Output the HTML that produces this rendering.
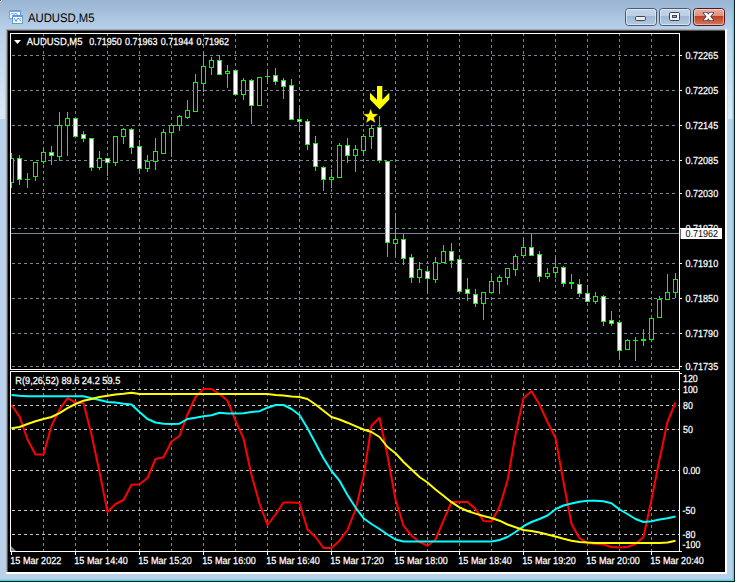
<!DOCTYPE html>
<html><head><meta charset="utf-8"><title>AUDUSD,M5</title>
<style>html,body{margin:0;padding:0;background:#fff;overflow:hidden}body{width:737px;height:583px}</style></head>
<body>
<svg width="737" height="583" viewBox="0 0 737 583" style="display:block;font-family:'Liberation Sans',sans-serif;text-rendering:geometricPrecision">
<defs>
<linearGradient id="tb" x1="0" y1="0" x2="0" y2="1"><stop offset="0" stop-color="#99b4d1"/><stop offset="1" stop-color="#b9d1ea"/></linearGradient>
<linearGradient id="bt" x1="0" y1="0" x2="0" y2="1"><stop offset="0" stop-color="#c3d5e9"/><stop offset="0.45" stop-color="#bacee5"/><stop offset="0.47" stop-color="#9fb8d6"/><stop offset="1" stop-color="#b5cae2"/></linearGradient>
<linearGradient id="bc" x1="0" y1="0" x2="0" y2="1"><stop offset="0" stop-color="#ebb0a2"/><stop offset="0.45" stop-color="#dd8f7d"/><stop offset="0.47" stop-color="#c0401f"/><stop offset="1" stop-color="#d67a64"/></linearGradient>
<linearGradient id="sg" x1="0" y1="0" x2="0" y2="1"><stop offset="0" stop-color="#b9d1ea"/><stop offset="1" stop-color="#dde8f4"/></linearGradient>
<clipPath id="cm"><rect x="11" y="34" width="668" height="335"/></clipPath>
<clipPath id="cs"><rect x="11" y="372" width="668" height="179"/></clipPath>
</defs>
<rect width="737" height="583" fill="#ffffff"/>
<rect x="0" y="0" width="734" height="581" fill="#b9d1ea"/>
<rect x="0" y="0" width="734" height="30" fill="url(#tb)"/>
<rect x="0" y="30" width="4.8" height="89" fill="url(#sg)"/>
<rect x="728" y="30" width="5" height="89" fill="url(#sg)"/>
<rect x="732.6" y="0" width="1.4" height="581" fill="#3fd8f3"/>
<rect x="0" y="579.6" width="734" height="1.4" fill="#3fd8f3"/>
<rect x="734" y="0" width="1" height="582" fill="#1a1a1a"/>
<rect x="0" y="581" width="735" height="1" fill="#1a1a1a"/>
<rect x="0" y="0" width="1" height="1" fill="#555555"/>
<rect x="1" y="0" width="1" height="1" fill="#e4ebf3"/>
<rect x="0" y="1" width="1" height="1" fill="#e4ebf3"/>
<rect x="6" y="29" width="721" height="545" fill="#ffffff"/>
<rect x="6" y="29" width="719" height="543" fill="#a4a9b0"/>
<rect x="7" y="30" width="718" height="542" fill="#555555"/>
<rect x="8" y="31" width="717" height="541" fill="#000000"/>
<g shape-rendering="crispEdges">
<rect x="9" y="10" width="12" height="9" fill="#6fa0f6"/>
<rect x="10" y="11.6" width="10" height="6.4" fill="#fdfdff"/>
<rect x="12" y="15" width="11" height="9" fill="#5f96f8"/>
<rect x="13" y="16.6" width="9" height="6.4" fill="#ffffff"/>
<path d="M9.5 10.5 h11 v8 M12.5 23.5 v-8 h10 v8 z" fill="none" stroke="#5aa884" stroke-width="1" stroke-dasharray="1 1" opacity="0.7"/>
</g>
<path d="M11 14.5 l1.5-1.5 1.5 1.5 1.5-1.5 2 2" fill="none" stroke="#4f8dfa" stroke-width="1"/>
<path d="M14 18 l2 3.5 1.5-3 1.5 0 2 3" fill="none" stroke="#4f8dfa" stroke-width="1"/>
<text x="28" y="21.5" font-size="12.4" fill="#000000" textLength="66.5" lengthAdjust="spacingAndGlyphs">AUDUSD,M5</text>
<rect x="625.5" y="8.5" width="31" height="17" rx="3" ry="3" fill="url(#bt)" stroke="#4e5a6e"/>
<rect x="626.5" y="9.5" width="29" height="15" rx="2" ry="2" fill="none" stroke="#ffffff" stroke-opacity="0.45"/>
<rect x="659.5" y="8.5" width="31" height="17" rx="3" ry="3" fill="url(#bt)" stroke="#4e5a6e"/>
<rect x="660.5" y="9.5" width="29" height="15" rx="2" ry="2" fill="none" stroke="#ffffff" stroke-opacity="0.45"/>
<rect x="693.5" y="8.5" width="31" height="17" rx="3" ry="3" fill="url(#bc)" stroke="#4a1a22"/>
<rect x="694.5" y="9.5" width="29" height="15" rx="2" ry="2" fill="none" stroke="#ffffff" stroke-opacity="0.45"/>
<rect x="635.5" y="16.5" width="10" height="4" rx="1.2" fill="#ececec" stroke="#3c4458"/>
<rect x="669.5" y="12.5" width="10" height="8" rx="1.2" fill="#f4f4f4" stroke="#3c4458"/>
<rect x="672.5" y="15.5" width="4" height="2" fill="#8fa9c9" stroke="#3c4458"/>
<polygon points="703.5,12.8 707,12.8 708.4,14.7 709.8,12.8 713.3,12.8 710.2,16.5 713.3,20.2 709.8,20.2 708.4,18.3 707,20.2 703.5,20.2 706.6,16.5" fill="#3c4458" stroke="#3c4458" stroke-width="1.6" stroke-linejoin="round"/>
<polygon points="703.5,12.8 707,12.8 708.4,14.7 709.8,12.8 713.3,12.8 710.2,16.5 713.3,20.2 709.8,20.2 708.4,18.3 707,20.2 703.5,20.2 706.6,16.5" fill="#ffffff"/>
<g shape-rendering="crispEdges">
<line x1="12" y1="55.5" x2="677" y2="55.5" stroke="#778899" stroke-dasharray="3 3"/>
<line x1="12" y1="90.5" x2="677" y2="90.5" stroke="#778899" stroke-dasharray="3 3"/>
<line x1="12" y1="125.5" x2="677" y2="125.5" stroke="#778899" stroke-dasharray="3 3"/>
<line x1="12" y1="160.5" x2="677" y2="160.5" stroke="#778899" stroke-dasharray="3 3"/>
<line x1="12" y1="193.5" x2="677" y2="193.5" stroke="#778899" stroke-dasharray="3 3"/>
<line x1="12" y1="228.5" x2="677" y2="228.5" stroke="#778899" stroke-dasharray="3 3"/>
<line x1="12" y1="263.5" x2="677" y2="263.5" stroke="#778899" stroke-dasharray="3 3"/>
<line x1="12" y1="298.5" x2="677" y2="298.5" stroke="#778899" stroke-dasharray="3 3"/>
<line x1="12" y1="333.5" x2="677" y2="333.5" stroke="#778899" stroke-dasharray="3 3"/>
<line x1="12" y1="366.5" x2="677" y2="366.5" stroke="#778899" stroke-dasharray="3 3"/>
<line x1="43.5" y1="33" x2="43.5" y2="369" stroke="#778899" stroke-dasharray="3 3"/>
<line x1="43.5" y1="372" x2="43.5" y2="551" stroke="#778899" stroke-dasharray="3 3" stroke-dashoffset="3"/>
<line x1="75.5" y1="33" x2="75.5" y2="369" stroke="#778899" stroke-dasharray="3 3"/>
<line x1="75.5" y1="372" x2="75.5" y2="551" stroke="#778899" stroke-dasharray="3 3" stroke-dashoffset="3"/>
<line x1="107.5" y1="33" x2="107.5" y2="369" stroke="#778899" stroke-dasharray="3 3"/>
<line x1="107.5" y1="372" x2="107.5" y2="551" stroke="#778899" stroke-dasharray="3 3" stroke-dashoffset="3"/>
<line x1="139.5" y1="33" x2="139.5" y2="369" stroke="#778899" stroke-dasharray="3 3"/>
<line x1="139.5" y1="372" x2="139.5" y2="551" stroke="#778899" stroke-dasharray="3 3" stroke-dashoffset="3"/>
<line x1="171.5" y1="33" x2="171.5" y2="369" stroke="#778899" stroke-dasharray="3 3"/>
<line x1="171.5" y1="372" x2="171.5" y2="551" stroke="#778899" stroke-dasharray="3 3" stroke-dashoffset="3"/>
<line x1="203.5" y1="33" x2="203.5" y2="369" stroke="#778899" stroke-dasharray="3 3"/>
<line x1="203.5" y1="372" x2="203.5" y2="551" stroke="#778899" stroke-dasharray="3 3" stroke-dashoffset="3"/>
<line x1="235.5" y1="33" x2="235.5" y2="369" stroke="#778899" stroke-dasharray="3 3"/>
<line x1="235.5" y1="372" x2="235.5" y2="551" stroke="#778899" stroke-dasharray="3 3" stroke-dashoffset="3"/>
<line x1="267.5" y1="33" x2="267.5" y2="369" stroke="#778899" stroke-dasharray="3 3"/>
<line x1="267.5" y1="372" x2="267.5" y2="551" stroke="#778899" stroke-dasharray="3 3" stroke-dashoffset="3"/>
<line x1="299.5" y1="33" x2="299.5" y2="369" stroke="#778899" stroke-dasharray="3 3"/>
<line x1="299.5" y1="372" x2="299.5" y2="551" stroke="#778899" stroke-dasharray="3 3" stroke-dashoffset="3"/>
<line x1="331.5" y1="33" x2="331.5" y2="369" stroke="#778899" stroke-dasharray="3 3"/>
<line x1="331.5" y1="372" x2="331.5" y2="551" stroke="#778899" stroke-dasharray="3 3" stroke-dashoffset="3"/>
<line x1="363.5" y1="33" x2="363.5" y2="369" stroke="#778899" stroke-dasharray="3 3"/>
<line x1="363.5" y1="372" x2="363.5" y2="551" stroke="#778899" stroke-dasharray="3 3" stroke-dashoffset="3"/>
<line x1="395.5" y1="33" x2="395.5" y2="369" stroke="#778899" stroke-dasharray="3 3"/>
<line x1="395.5" y1="372" x2="395.5" y2="551" stroke="#778899" stroke-dasharray="3 3" stroke-dashoffset="3"/>
<line x1="427.5" y1="33" x2="427.5" y2="369" stroke="#778899" stroke-dasharray="3 3"/>
<line x1="427.5" y1="372" x2="427.5" y2="551" stroke="#778899" stroke-dasharray="3 3" stroke-dashoffset="3"/>
<line x1="459.5" y1="33" x2="459.5" y2="369" stroke="#778899" stroke-dasharray="3 3"/>
<line x1="459.5" y1="372" x2="459.5" y2="551" stroke="#778899" stroke-dasharray="3 3" stroke-dashoffset="3"/>
<line x1="491.5" y1="33" x2="491.5" y2="369" stroke="#778899" stroke-dasharray="3 3"/>
<line x1="491.5" y1="372" x2="491.5" y2="551" stroke="#778899" stroke-dasharray="3 3" stroke-dashoffset="3"/>
<line x1="523.5" y1="33" x2="523.5" y2="369" stroke="#778899" stroke-dasharray="3 3"/>
<line x1="523.5" y1="372" x2="523.5" y2="551" stroke="#778899" stroke-dasharray="3 3" stroke-dashoffset="3"/>
<line x1="555.5" y1="33" x2="555.5" y2="369" stroke="#778899" stroke-dasharray="3 3"/>
<line x1="555.5" y1="372" x2="555.5" y2="551" stroke="#778899" stroke-dasharray="3 3" stroke-dashoffset="3"/>
<line x1="587.5" y1="33" x2="587.5" y2="369" stroke="#778899" stroke-dasharray="3 3"/>
<line x1="587.5" y1="372" x2="587.5" y2="551" stroke="#778899" stroke-dasharray="3 3" stroke-dashoffset="3"/>
<line x1="619.5" y1="33" x2="619.5" y2="369" stroke="#778899" stroke-dasharray="3 3"/>
<line x1="619.5" y1="372" x2="619.5" y2="551" stroke="#778899" stroke-dasharray="3 3" stroke-dashoffset="3"/>
<line x1="651.5" y1="33" x2="651.5" y2="369" stroke="#778899" stroke-dasharray="3 3"/>
<line x1="651.5" y1="372" x2="651.5" y2="551" stroke="#778899" stroke-dasharray="3 3" stroke-dashoffset="3"/>
<line x1="12" y1="389.5" x2="679" y2="389.5" stroke="#c8c8c8" stroke-dasharray="3 3"/>
<line x1="12" y1="405.5" x2="679" y2="405.5" stroke="#c8c8c8" stroke-dasharray="3 3"/>
<line x1="12" y1="429.5" x2="679" y2="429.5" stroke="#c8c8c8" stroke-dasharray="3 3"/>
<line x1="12" y1="470.5" x2="679" y2="470.5" stroke="#c8c8c8" stroke-dasharray="3 3"/>
<line x1="12" y1="510.5" x2="679" y2="510.5" stroke="#c8c8c8" stroke-dasharray="3 3"/>
<line x1="12" y1="534.5" x2="679" y2="534.5" stroke="#c8c8c8" stroke-dasharray="3 3"/>
<line x1="11" y1="233.5" x2="679" y2="233.5" stroke="#778899"/>
</g>
<g clip-path="url(#cm)" shape-rendering="crispEdges">
<rect x="11" y="153" width="1" height="35" fill="#00ff00"/>
<rect x="9.5" y="158.5" width="4" height="24" fill="#000000" stroke="#00ff00"/>
<rect x="19" y="155" width="1" height="30" fill="#00ff00"/>
<rect x="17.5" y="158.5" width="4" height="21" fill="#ffffff" stroke="#00ff00"/>
<rect x="27" y="173" width="1" height="15" fill="#00ff00"/>
<rect x="25" y="179" width="5" height="1" fill="#00ff00"/>
<rect x="35" y="162" width="1" height="19" fill="#00ff00"/>
<rect x="33.5" y="162.5" width="4" height="14" fill="#000000" stroke="#00ff00"/>
<rect x="43" y="148" width="1" height="16" fill="#00ff00"/>
<rect x="41.5" y="152.5" width="4" height="9" fill="#000000" stroke="#00ff00"/>
<rect x="51" y="146" width="1" height="19" fill="#00ff00"/>
<rect x="49.5" y="152.5" width="4" height="3" fill="#ffffff" stroke="#00ff00"/>
<rect x="59" y="112" width="1" height="49" fill="#00ff00"/>
<rect x="57.5" y="125.5" width="4" height="31" fill="#000000" stroke="#00ff00"/>
<rect x="67" y="112" width="1" height="44" fill="#00ff00"/>
<rect x="65.5" y="118.5" width="4" height="7" fill="#000000" stroke="#00ff00"/>
<rect x="75" y="118" width="1" height="20" fill="#00ff00"/>
<rect x="73.5" y="118.5" width="4" height="18" fill="#ffffff" stroke="#00ff00"/>
<rect x="83" y="131" width="1" height="11" fill="#00ff00"/>
<rect x="81.5" y="134.5" width="4" height="4" fill="#ffffff" stroke="#00ff00"/>
<rect x="91" y="138" width="1" height="33" fill="#00ff00"/>
<rect x="89.5" y="138.5" width="4" height="29" fill="#ffffff" stroke="#00ff00"/>
<rect x="99" y="151" width="1" height="19" fill="#00ff00"/>
<rect x="97.5" y="158.5" width="4" height="9" fill="#000000" stroke="#00ff00"/>
<rect x="107" y="158" width="1" height="18" fill="#00ff00"/>
<rect x="105.5" y="158.5" width="4" height="4" fill="#ffffff" stroke="#00ff00"/>
<rect x="115" y="136" width="1" height="30" fill="#00ff00"/>
<rect x="113.5" y="136.5" width="4" height="26" fill="#000000" stroke="#00ff00"/>
<rect x="123" y="128" width="1" height="16" fill="#00ff00"/>
<rect x="121.5" y="129.5" width="4" height="7" fill="#000000" stroke="#00ff00"/>
<rect x="131" y="128" width="1" height="26" fill="#00ff00"/>
<rect x="129.5" y="129.5" width="4" height="18" fill="#ffffff" stroke="#00ff00"/>
<rect x="139" y="140" width="1" height="31" fill="#00ff00"/>
<rect x="137.5" y="146.5" width="4" height="22" fill="#ffffff" stroke="#00ff00"/>
<rect x="147" y="155" width="1" height="17" fill="#00ff00"/>
<rect x="145.5" y="161.5" width="4" height="7" fill="#000000" stroke="#00ff00"/>
<rect x="155" y="138" width="1" height="32" fill="#00ff00"/>
<rect x="153.5" y="151.5" width="4" height="10" fill="#000000" stroke="#00ff00"/>
<rect x="163" y="129" width="1" height="25" fill="#00ff00"/>
<rect x="161.5" y="132.5" width="4" height="21" fill="#000000" stroke="#00ff00"/>
<rect x="171" y="123" width="1" height="34" fill="#00ff00"/>
<rect x="169.5" y="125.5" width="4" height="7" fill="#000000" stroke="#00ff00"/>
<rect x="179" y="115" width="1" height="16" fill="#00ff00"/>
<rect x="177.5" y="116.5" width="4" height="9" fill="#000000" stroke="#00ff00"/>
<rect x="187" y="100" width="1" height="19" fill="#00ff00"/>
<rect x="185.5" y="110.5" width="4" height="7" fill="#000000" stroke="#00ff00"/>
<rect x="195" y="74" width="1" height="38" fill="#00ff00"/>
<rect x="193.5" y="82.5" width="4" height="29" fill="#000000" stroke="#00ff00"/>
<rect x="203" y="54" width="1" height="38" fill="#00ff00"/>
<rect x="201.5" y="66.5" width="4" height="17" fill="#000000" stroke="#00ff00"/>
<rect x="211" y="57" width="1" height="18" fill="#00ff00"/>
<rect x="209.5" y="60.5" width="4" height="7" fill="#000000" stroke="#00ff00"/>
<rect x="219" y="55" width="1" height="19" fill="#00ff00"/>
<rect x="217.5" y="60.5" width="4" height="14" fill="#ffffff" stroke="#00ff00"/>
<rect x="227" y="65" width="1" height="23" fill="#00ff00"/>
<rect x="225.5" y="71.5" width="4" height="2" fill="#000000" stroke="#00ff00"/>
<rect x="235" y="70" width="1" height="24" fill="#00ff00"/>
<rect x="233.5" y="70.5" width="4" height="24" fill="#ffffff" stroke="#00ff00"/>
<rect x="243" y="78" width="1" height="22" fill="#00ff00"/>
<rect x="241.5" y="80.5" width="4" height="14" fill="#000000" stroke="#00ff00"/>
<rect x="251" y="79" width="1" height="45" fill="#00ff00"/>
<rect x="249.5" y="80.5" width="4" height="25" fill="#ffffff" stroke="#00ff00"/>
<rect x="259" y="78" width="1" height="28" fill="#00ff00"/>
<rect x="257.5" y="77.5" width="4" height="28" fill="#000000" stroke="#00ff00"/>
<rect x="267" y="71" width="1" height="13" fill="#00ff00"/>
<rect x="265" y="76" width="5" height="1" fill="#00ff00"/>
<rect x="275" y="68" width="1" height="17" fill="#00ff00"/>
<rect x="273.5" y="75.5" width="4" height="6" fill="#ffffff" stroke="#00ff00"/>
<rect x="283" y="78" width="1" height="21" fill="#00ff00"/>
<rect x="281.5" y="80.5" width="4" height="6" fill="#ffffff" stroke="#00ff00"/>
<rect x="291" y="79" width="1" height="41" fill="#00ff00"/>
<rect x="289.5" y="85.5" width="4" height="34" fill="#ffffff" stroke="#00ff00"/>
<rect x="299" y="108" width="1" height="23" fill="#00ff00"/>
<rect x="297.5" y="119.5" width="4" height="2" fill="#ffffff" stroke="#00ff00"/>
<rect x="307" y="119" width="1" height="31" fill="#00ff00"/>
<rect x="305.5" y="121.5" width="4" height="23" fill="#ffffff" stroke="#00ff00"/>
<rect x="315" y="136" width="1" height="35" fill="#00ff00"/>
<rect x="313.5" y="143.5" width="4" height="23" fill="#ffffff" stroke="#00ff00"/>
<rect x="323" y="166" width="1" height="25" fill="#00ff00"/>
<rect x="321.5" y="167.5" width="4" height="12" fill="#ffffff" stroke="#00ff00"/>
<rect x="331" y="169" width="1" height="19" fill="#00ff00"/>
<rect x="329.5" y="177.5" width="4" height="2" fill="#000000" stroke="#00ff00"/>
<rect x="339" y="143" width="1" height="35" fill="#00ff00"/>
<rect x="337.5" y="145.5" width="4" height="32" fill="#000000" stroke="#00ff00"/>
<rect x="347" y="138" width="1" height="25" fill="#00ff00"/>
<rect x="345.5" y="145.5" width="4" height="10" fill="#ffffff" stroke="#00ff00"/>
<rect x="355" y="145" width="1" height="27" fill="#00ff00"/>
<rect x="353.5" y="149.5" width="4" height="6" fill="#000000" stroke="#00ff00"/>
<rect x="363" y="134" width="1" height="21" fill="#00ff00"/>
<rect x="361.5" y="136.5" width="4" height="14" fill="#000000" stroke="#00ff00"/>
<rect x="371" y="125" width="1" height="24" fill="#00ff00"/>
<rect x="369.5" y="128.5" width="4" height="8" fill="#000000" stroke="#00ff00"/>
<rect x="379" y="116" width="1" height="47" fill="#00ff00"/>
<rect x="377.5" y="127.5" width="4" height="33" fill="#ffffff" stroke="#00ff00"/>
<rect x="387" y="161" width="1" height="96" fill="#00ff00"/>
<rect x="385.5" y="161.5" width="4" height="81" fill="#ffffff" stroke="#00ff00"/>
<rect x="395" y="214" width="1" height="42" fill="#00ff00"/>
<rect x="393.5" y="239.5" width="4" height="4" fill="#000000" stroke="#00ff00"/>
<rect x="403" y="234" width="1" height="31" fill="#00ff00"/>
<rect x="401.5" y="239.5" width="4" height="19" fill="#ffffff" stroke="#00ff00"/>
<rect x="411" y="254" width="1" height="29" fill="#00ff00"/>
<rect x="409.5" y="257.5" width="4" height="20" fill="#ffffff" stroke="#00ff00"/>
<rect x="419" y="262" width="1" height="21" fill="#00ff00"/>
<rect x="417.5" y="269.5" width="4" height="8" fill="#000000" stroke="#00ff00"/>
<rect x="427" y="266" width="1" height="27" fill="#00ff00"/>
<rect x="425.5" y="271.5" width="4" height="7" fill="#ffffff" stroke="#00ff00"/>
<rect x="435" y="257" width="1" height="26" fill="#00ff00"/>
<rect x="433.5" y="262.5" width="4" height="17" fill="#000000" stroke="#00ff00"/>
<rect x="443" y="245" width="1" height="17" fill="#00ff00"/>
<rect x="441.5" y="251.5" width="4" height="11" fill="#000000" stroke="#00ff00"/>
<rect x="451" y="243" width="1" height="25" fill="#00ff00"/>
<rect x="449.5" y="251.5" width="4" height="9" fill="#ffffff" stroke="#00ff00"/>
<rect x="459" y="255" width="1" height="37" fill="#00ff00"/>
<rect x="457.5" y="259.5" width="4" height="32" fill="#ffffff" stroke="#00ff00"/>
<rect x="467" y="278" width="1" height="23" fill="#00ff00"/>
<rect x="465.5" y="289.5" width="4" height="4" fill="#ffffff" stroke="#00ff00"/>
<rect x="475" y="289" width="1" height="18" fill="#00ff00"/>
<rect x="473.5" y="294.5" width="4" height="9" fill="#ffffff" stroke="#00ff00"/>
<rect x="483" y="293" width="1" height="27" fill="#00ff00"/>
<rect x="481.5" y="292.5" width="4" height="11" fill="#000000" stroke="#00ff00"/>
<rect x="491" y="276" width="1" height="17" fill="#00ff00"/>
<rect x="489.5" y="281.5" width="4" height="11" fill="#000000" stroke="#00ff00"/>
<rect x="499" y="275" width="1" height="19" fill="#00ff00"/>
<rect x="497.5" y="277.5" width="4" height="4" fill="#000000" stroke="#00ff00"/>
<rect x="507" y="268" width="1" height="17" fill="#00ff00"/>
<rect x="505.5" y="268.5" width="4" height="9" fill="#000000" stroke="#00ff00"/>
<rect x="515" y="254" width="1" height="22" fill="#00ff00"/>
<rect x="513.5" y="256.5" width="4" height="13" fill="#000000" stroke="#00ff00"/>
<rect x="523" y="238" width="1" height="20" fill="#00ff00"/>
<rect x="521.5" y="247.5" width="4" height="8" fill="#000000" stroke="#00ff00"/>
<rect x="531" y="234" width="1" height="21" fill="#00ff00"/>
<rect x="529.5" y="247.5" width="4" height="8" fill="#ffffff" stroke="#00ff00"/>
<rect x="539" y="251" width="1" height="31" fill="#00ff00"/>
<rect x="537.5" y="254.5" width="4" height="22" fill="#ffffff" stroke="#00ff00"/>
<rect x="547" y="268" width="1" height="11" fill="#00ff00"/>
<rect x="545.5" y="273.5" width="4" height="3" fill="#000000" stroke="#00ff00"/>
<rect x="555" y="257" width="1" height="21" fill="#00ff00"/>
<rect x="553.5" y="267.5" width="4" height="5" fill="#000000" stroke="#00ff00"/>
<rect x="563" y="266" width="1" height="21" fill="#00ff00"/>
<rect x="561.5" y="267.5" width="4" height="16" fill="#ffffff" stroke="#00ff00"/>
<rect x="571" y="274" width="1" height="15" fill="#00ff00"/>
<rect x="569.5" y="282.5" width="4" height="1" fill="#ffffff" stroke="#00ff00"/>
<rect x="579" y="279" width="1" height="18" fill="#00ff00"/>
<rect x="577.5" y="284.5" width="4" height="9" fill="#ffffff" stroke="#00ff00"/>
<rect x="587" y="285" width="1" height="17" fill="#00ff00"/>
<rect x="585.5" y="293.5" width="4" height="8" fill="#ffffff" stroke="#00ff00"/>
<rect x="595" y="292" width="1" height="12" fill="#00ff00"/>
<rect x="593.5" y="296.5" width="4" height="5" fill="#000000" stroke="#00ff00"/>
<rect x="603" y="295" width="1" height="31" fill="#00ff00"/>
<rect x="601.5" y="296.5" width="4" height="25" fill="#ffffff" stroke="#00ff00"/>
<rect x="611" y="311" width="1" height="15" fill="#00ff00"/>
<rect x="609.5" y="320.5" width="4" height="3" fill="#ffffff" stroke="#00ff00"/>
<rect x="619" y="320" width="1" height="38" fill="#00ff00"/>
<rect x="617.5" y="322.5" width="4" height="28" fill="#ffffff" stroke="#00ff00"/>
<rect x="627" y="339" width="1" height="11" fill="#00ff00"/>
<rect x="625.5" y="340.5" width="4" height="9" fill="#000000" stroke="#00ff00"/>
<rect x="635" y="337" width="1" height="24" fill="#00ff00"/>
<rect x="633" y="340" width="5" height="1" fill="#00ff00"/>
<rect x="643" y="329" width="1" height="17" fill="#00ff00"/>
<rect x="641.5" y="339.5" width="4" height="1" fill="#ffffff" stroke="#00ff00"/>
<rect x="651" y="318" width="1" height="22" fill="#00ff00"/>
<rect x="649.5" y="318.5" width="4" height="21" fill="#000000" stroke="#00ff00"/>
<rect x="659" y="296" width="1" height="22" fill="#00ff00"/>
<rect x="657.5" y="299.5" width="4" height="18" fill="#000000" stroke="#00ff00"/>
<rect x="667" y="274" width="1" height="26" fill="#00ff00"/>
<rect x="665.5" y="292.5" width="4" height="7" fill="#000000" stroke="#00ff00"/>
<rect x="675" y="273" width="1" height="25" fill="#00ff00"/>
<rect x="673.5" y="279.5" width="4" height="13" fill="#000000" stroke="#00ff00"/>
</g>
<polygon points="377,86 382.3,86 382.3,99.7 389.3,92.8 389.3,99.5 379.65,109.6 370,99.5 370,92.8 377,99.7" fill="#ffff00"/>
<polygon points="370.70,109.20 372.58,114.01 377.74,114.31 373.74,117.59 375.05,122.59 370.70,119.80 366.35,122.59 367.66,117.59 363.66,114.31 368.82,114.01" fill="#ffff00" stroke="#d8a000" stroke-width="0.4"/>
<g clip-path="url(#cs)">
<polyline points="11.5,405.0 19.5,416.5 27.5,439.5 35.5,454.5 43.5,454.5 51.5,425.7 59.5,409.5 67.5,398.2 75.5,402.5 83.5,403.2 91.5,434.5 99.5,472.0 107.5,512.0 115.5,504.0 123.5,500.0 131.5,484.7 139.5,484.2 147.5,478.0 155.5,459.0 163.5,457.3 171.5,441.5 179.5,436.0 187.5,414.5 195.5,397.0 203.5,389.0 211.5,389.0 219.5,394.0 227.5,400.7 235.5,420.7 243.5,438.5 251.5,475.0 259.5,503.5 267.5,525.0 275.5,514.5 283.5,502.5 291.5,502.5 299.5,503.0 307.5,529.5 315.5,537.0 323.5,548.0 331.5,548.0 339.5,540.7 347.5,530.0 355.5,509.5 363.5,477.0 371.5,425.7 379.5,417.7 387.5,455.7 395.5,499.5 403.5,525.7 411.5,535.7 419.5,542.0 427.5,545.7 435.5,539.5 443.5,520.7 451.5,502.0 459.5,502.0 467.5,502.0 475.5,509.0 483.5,521.0 491.5,521.5 499.5,507.0 507.5,480.5 515.5,434.5 523.5,398.0 531.5,391.2 539.5,404.5 547.5,422.0 555.5,438.0 563.5,482.0 571.5,524.0 579.5,538.2 587.5,543.2 595.5,543.7 603.5,544.5 611.5,547.0 619.5,547.5 627.5,547.0 635.5,544.0 643.5,537.0 651.5,499.5 659.5,459.5 667.5,422.0 675.5,402.5" fill="none" stroke="#ff0000" stroke-width="2" stroke-linejoin="round"/>
<polyline points="11.5,395.0 19.5,395.7 27.5,396.2 35.5,396.2 43.5,396.2 51.5,396.2 59.5,396.2 67.5,396.2 75.5,396.2 83.5,396.2 91.5,398.2 99.5,400.0 107.5,402.0 115.5,402.5 123.5,403.7 131.5,404.5 139.5,412.0 147.5,419.0 155.5,422.5 163.5,423.7 171.5,424.0 179.5,423.7 187.5,419.0 195.5,417.7 203.5,416.2 211.5,415.2 219.5,412.7 227.5,413.5 235.5,413.5 243.5,413.2 251.5,412.0 259.5,411.2 267.5,407.7 275.5,405.0 283.5,405.0 291.5,409.0 299.5,415.0 307.5,428.2 315.5,443.2 323.5,458.2 331.5,471.0 339.5,480.7 347.5,495.0 355.5,507.5 363.5,518.2 371.5,524.0 379.5,529.0 387.5,534.5 395.5,539.5 403.5,541.5 411.5,541.5 419.5,541.5 427.5,541.5 435.5,541.5 443.5,541.5 451.5,541.5 459.5,541.5 467.5,541.5 475.5,541.5 483.5,541.5 491.5,541.5 499.5,540.0 507.5,537.0 515.5,532.0 523.5,526.2 531.5,522.0 539.5,519.0 547.5,515.5 555.5,509.2 563.5,505.5 571.5,503.5 579.5,501.8 587.5,500.8 595.5,500.8 603.5,501.3 611.5,503.2 619.5,509.5 627.5,514.0 635.5,519.0 643.5,522.0 651.5,521.2 659.5,519.5 667.5,518.2 675.5,516.5" fill="none" stroke="#00ffff" stroke-width="2" stroke-linejoin="round"/>
<polyline points="11.5,428.2 19.5,427.0 27.5,424.0 35.5,421.2 43.5,419.0 51.5,417.0 59.5,413.2 67.5,408.2 75.5,404.0 83.5,400.7 91.5,399.0 99.5,397.0 107.5,395.7 115.5,394.5 123.5,393.7 131.5,392.7 139.5,394.0 147.5,394.0 155.5,394.0 163.5,394.0 171.5,394.0 179.5,394.0 187.5,394.0 195.5,394.0 203.5,394.0 211.5,394.0 219.5,394.0 227.5,394.0 235.5,394.0 243.5,394.0 251.5,394.0 259.5,394.0 267.5,394.0 275.5,395.0 283.5,395.5 291.5,396.5 299.5,397.0 307.5,399.0 315.5,404.5 323.5,410.7 331.5,417.0 339.5,419.5 347.5,422.7 355.5,426.2 363.5,429.5 371.5,432.0 379.5,437.0 387.5,447.0 395.5,453.2 403.5,462.0 411.5,469.5 419.5,477.0 427.5,482.5 435.5,489.5 443.5,495.7 451.5,502.2 459.5,507.3 467.5,511.0 475.5,513.6 483.5,516.0 491.5,518.0 499.5,520.7 507.5,524.5 515.5,527.2 523.5,530.0 531.5,531.0 539.5,532.5 547.5,534.5 555.5,536.5 563.5,538.7 571.5,540.7 579.5,542.0 587.5,542.5 595.5,543.0 603.5,543.0 611.5,543.0 619.5,543.0 627.5,543.0 635.5,543.0 643.5,543.0 651.5,543.0 659.5,543.0 667.5,542.5 675.5,540.7" fill="none" stroke="#ffff00" stroke-width="2" stroke-linejoin="round"/>
</g>
<g shape-rendering="crispEdges" fill="#ffffff">
<rect x="10" y="33" width="670" height="1"/>
<rect x="10" y="33" width="1" height="337"/>
<rect x="679" y="33" width="1" height="337"/>
<rect x="10" y="369" width="670" height="1"/>
<rect x="10" y="371" width="670" height="1"/>
<rect x="10" y="371" width="1" height="181"/>
<rect x="679" y="371" width="1" height="181"/>
<rect x="10" y="551" width="670" height="1"/>
<rect x="680" y="55" width="2" height="1"/>
<rect x="680" y="90" width="2" height="1"/>
<rect x="680" y="125" width="2" height="1"/>
<rect x="680" y="160" width="2" height="1"/>
<rect x="680" y="193" width="2" height="1"/>
<rect x="680" y="228" width="2" height="1"/>
<rect x="680" y="263" width="2" height="1"/>
<rect x="680" y="298" width="2" height="1"/>
<rect x="680" y="333" width="2" height="1"/>
<rect x="680" y="366" width="2" height="1"/>
<rect x="680" y="551" width="2" height="1"/>
<rect x="680" y="373" width="2" height="1"/>
<rect x="11" y="552" width="1" height="3"/>
<rect x="75" y="552" width="1" height="3"/>
<rect x="139" y="552" width="1" height="3"/>
<rect x="203" y="552" width="1" height="3"/>
<rect x="267" y="552" width="1" height="3"/>
<rect x="331" y="552" width="1" height="3"/>
<rect x="395" y="552" width="1" height="3"/>
<rect x="459" y="552" width="1" height="3"/>
<rect x="523" y="552" width="1" height="3"/>
<rect x="587" y="552" width="1" height="3"/>
<rect x="651" y="552" width="1" height="3"/>
</g>
<polygon points="11,546 11,551 16,551" fill="#778899"/>
<g font-size="10.2" fill="#ffffff" stroke="#ffffff" stroke-width="0.25">
<polygon points="14,40 21,40 17.5,44" fill="#ffffff" stroke="none"/>
<text y="45"><tspan x="26.8" textLength="55.7" lengthAdjust="spacingAndGlyphs">AUDUSD,M5</tspan> <tspan x="89.2" textLength="32.5" lengthAdjust="spacingAndGlyphs">0.71950</tspan> <tspan x="125" textLength="32.5" lengthAdjust="spacingAndGlyphs">0.71963</tspan> <tspan x="160.8" textLength="32.5" lengthAdjust="spacingAndGlyphs">0.71944</tspan> <tspan x="196.6" textLength="32.5" lengthAdjust="spacingAndGlyphs">0.71962</tspan></text>
<text x="15.3" y="384.05" textLength="105.0" lengthAdjust="spacingAndGlyphs">R(9,26,52) 89.6 24.2 59.5</text>
<text x="685.4" y="59.0" textLength="32.8" lengthAdjust="spacingAndGlyphs">0.72265</text>
<text x="685.4" y="94.0" textLength="32.8" lengthAdjust="spacingAndGlyphs">0.72205</text>
<text x="685.4" y="129.0" textLength="32.8" lengthAdjust="spacingAndGlyphs">0.72145</text>
<text x="685.4" y="164.0" textLength="32.8" lengthAdjust="spacingAndGlyphs">0.72085</text>
<text x="685.4" y="197.0" textLength="32.8" lengthAdjust="spacingAndGlyphs">0.72030</text>
<text x="685.4" y="232.0" textLength="32.8" lengthAdjust="spacingAndGlyphs">0.71970</text>
<text x="685.4" y="267.0" textLength="32.8" lengthAdjust="spacingAndGlyphs">0.71910</text>
<text x="685.4" y="302.0" textLength="32.8" lengthAdjust="spacingAndGlyphs">0.71850</text>
<text x="685.4" y="337.0" textLength="32.8" lengthAdjust="spacingAndGlyphs">0.71790</text>
<text x="685.4" y="370.0" textLength="32.8" lengthAdjust="spacingAndGlyphs">0.71735</text>
<text x="683" y="381.8" textLength="14.8" lengthAdjust="spacingAndGlyphs">120</text>
<text x="683" y="393.0" textLength="14.8" lengthAdjust="spacingAndGlyphs">100</text>
<text x="683" y="408.8" textLength="9.9" lengthAdjust="spacingAndGlyphs">80</text>
<text x="683" y="433.0" textLength="9.9" lengthAdjust="spacingAndGlyphs">50</text>
<text x="683" y="473.8" textLength="17.3" lengthAdjust="spacingAndGlyphs">0.00</text>
<text x="682.6" y="513.8" textLength="12.9" lengthAdjust="spacingAndGlyphs">-50</text>
<text x="682.6" y="537.6" textLength="12.9" lengthAdjust="spacingAndGlyphs">-80</text>
<text x="682.6" y="547.7" textLength="17.8" lengthAdjust="spacingAndGlyphs">-100</text>
<text x="10.3" y="563.95" textLength="51.0" lengthAdjust="spacingAndGlyphs">15 Mar 2022</text>
<text x="74.3" y="563.95" textLength="53.5" lengthAdjust="spacingAndGlyphs">15 Mar 14:40</text>
<text x="138.3" y="563.95" textLength="53.5" lengthAdjust="spacingAndGlyphs">15 Mar 15:20</text>
<text x="202.3" y="563.95" textLength="53.5" lengthAdjust="spacingAndGlyphs">15 Mar 16:00</text>
<text x="266.3" y="563.95" textLength="53.5" lengthAdjust="spacingAndGlyphs">15 Mar 16:40</text>
<text x="330.3" y="563.95" textLength="53.5" lengthAdjust="spacingAndGlyphs">15 Mar 17:20</text>
<text x="394.3" y="563.95" textLength="53.5" lengthAdjust="spacingAndGlyphs">15 Mar 18:00</text>
<text x="458.3" y="563.95" textLength="53.5" lengthAdjust="spacingAndGlyphs">15 Mar 18:40</text>
<text x="522.3" y="563.95" textLength="53.5" lengthAdjust="spacingAndGlyphs">15 Mar 19:20</text>
<text x="586.3" y="563.95" textLength="53.5" lengthAdjust="spacingAndGlyphs">15 Mar 20:00</text>
<text x="650.3" y="563.95" textLength="53.5" lengthAdjust="spacingAndGlyphs">15 Mar 20:40</text>
</g>
<rect x="680.6" y="228" width="41.4" height="11" fill="#ffffff"/>
<text x="685.4" y="237.0" font-size="10.2" fill="#000000" textLength="32.5" lengthAdjust="spacingAndGlyphs">0.71962</text>
</svg>
</body></html>
